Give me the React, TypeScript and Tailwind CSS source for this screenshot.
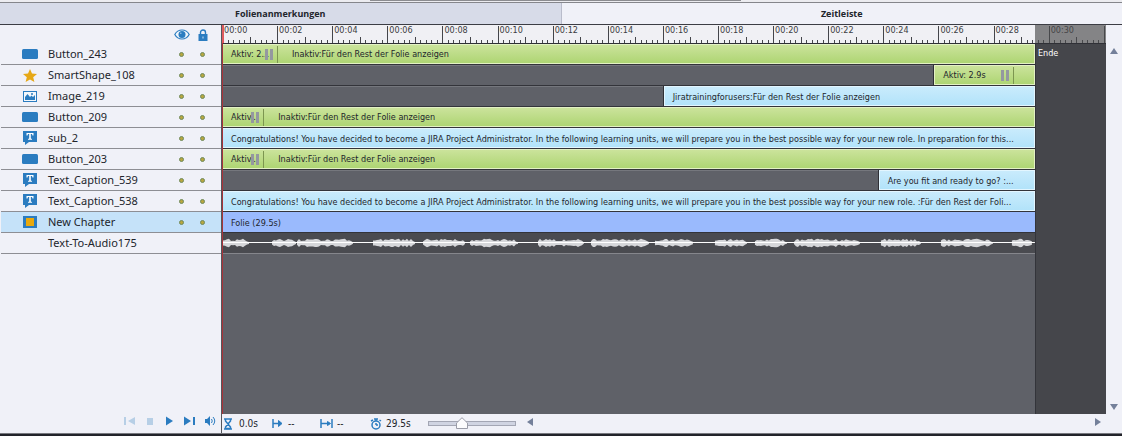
import type { ReactNode } from "react";
import { useState } from "react";

type Clip = { start: number; color: "green" | "blue" | "slide"; text: string; split?: number; rest?: string };
type Kind = "button" | "star" | "image" | "caption" | "slide" | "audio";
type Track = { name: string; kind: Kind; clip?: Clip };

const TOTAL = 32.08;
const END = 29.5;

const CONGRATS =
  "Congratulations! You have decided to become a JIRA Project Administrator. In the following learning units, we will prepare you in the best possible way for your new role. ";
const REST = "Inaktiv:Für den Rest der Folie anzeigen";

const tracks: Track[] = [
  { name: "Button_243", kind: "button", clip: { start: 0, color: "green", text: "Aktiv: 2...", split: 2, rest: REST } },
  { name: "SmartShape_108", kind: "star", clip: { start: 25.85, color: "green", text: "Aktiv: 2.9s", split: 28.75, rest: "" } },
  { name: "Image_219", kind: "image", clip: { start: 16.03, color: "blue", text: "Jiratrainingforusers:Für den Rest der Folie anzeigen" } },
  { name: "Button_209", kind: "button", clip: { start: 0, color: "green", text: "Aktiv...", split: 1.5, rest: REST } },
  { name: "sub_2", kind: "caption", clip: { start: 0, color: "blue", text: CONGRATS + "In preparation for this..." } },
  { name: "Button_203", kind: "button", clip: { start: 0, color: "green", text: "Aktiv...", split: 1.5, rest: REST } },
  { name: "Text_Caption_539", kind: "caption", clip: { start: 23.83, color: "blue", text: "Are you fit and ready to go? :..." } },
  { name: "Text_Caption_538", kind: "caption", clip: { start: 0, color: "blue", text: CONGRATS + ":Für den Rest der Foli..." } },
  { name: "New Chapter", kind: "slide", clip: { start: 0, color: "slide", text: "Folie (29.5s)" } },
  { name: "Text-To-Audio175", kind: "audio" },
];

const clipColors = {
  green: "bg-linear-to-b from-[#cbe39b] to-[#aed573] border-[#e3f1c4]",
  blue: "bg-linear-to-b from-[#c9ebfc] to-[#b2e3fa] border-[#e3f6ff]",
  slide: "bg-[#9abafd] border-[#9abafd]",
};

// spoken parts of the audio, in wave units (813 units = whole slide)
const speech = [
  [1, 28], [50, 74], [75, 131], [151, 194], [201, 244], [248, 296], [316, 362], [369, 427],
  [433, 472], [493, 526], [533, 565], [572, 638], [659, 699], [719, 771], [790, 811],
];

function wavePath() {
  let d = "";
  let seed = 7;
  for (const [from, to] of speech) {
    let top = "";
    let bottom = "";
    for (let x = from; x <= to; x += 2) {
      seed = (seed * 1103 + 377) % 9973;
      const edge = Math.min(1, (x - from + 3) / 5, (to - x + 2) / 7);
      const amp = Math.round((1.8 + (seed % 100) / 40) * edge * 10) / 10;
      top += `L${x} ${10 - amp}`;
      bottom = `L${x} ${10 + amp}` + bottom;
    }
    d += `M${from} 10${top}${bottom}Z`;
  }
  return d;
}

function KindIcon({ kind }: { kind: Kind }) {
  if (kind === "button") return <svg width="16" height="10"><rect width="16" height="10" rx="1.5" fill="#2b7cc0" /></svg>;
  if (kind === "star")
    return (
      <svg width="14" height="13" viewBox="0 0 14 13">
        <path d="M7 0l2 4.500 5 .5-3.800 3.200L11.400 13 7 10.400 2.600 13l1.200-4.800L0 5l5-.5z" fill="#e6a817" />
      </svg>
    );
  if (kind === "image")
    return (
      <svg width="14" height="11" viewBox="0 0 14 11">
        <rect x=".5" y=".5" width="13" height="10" fill="#f4f8fc" stroke="#2b7cc0" />
        <path d="M2 9V6l2.500-3L7 6l1.500-1.500L10 6l2-2v5z" fill="#2b7cc0" />
        <circle cx="9" cy="3" r="1" fill="#2b7cc0" />
      </svg>
    );
  if (kind === "caption")
    return (
      <svg width="14" height="14" viewBox="0 0 14 14">
        <path d="M0 0h14v11H6l-4 3v-3H0z" fill="#2b7cc0" />
        <path d="M3.500 2h7v2.500h-1L9 3H7.800v4.500l1.200.5v.8H5V8l1.200-.5V3H5l-.5 1.500h-1z" fill="#fff" />
      </svg>
    );
  if (kind === "slide")
    return (
      <svg width="14" height="12">
        <rect width="14" height="12" fill="#2b7cc0" />
        <rect x="3" y="2" width="8" height="8" fill="#e9a90c" />
      </svg>
    );
  return null;
}

function Dot({ label }: { label: string }) {
  return (
    <button aria-label={label} className="flex w-[21px] justify-center">
      <span className="size-[5px] rounded-full border border-[#6f8a5c] bg-[#b7a63f]" />
    </button>
  );
}

function TrackLabel({ track, selected, onSelect }: { track: Track; selected: boolean; onSelect: () => void }) {
  return (
    <div className={`ml-px flex h-[21px] items-center border-b border-[#8d8e94] pr-2 ${selected ? "bg-[#c5e2f9]" : ""}`}>
      <button onClick={onSelect} className="flex min-w-0 flex-1 items-center text-left">
        <span className="flex w-[47px] justify-center pl-[11px]">
          <KindIcon kind={track.kind} />
        </span>
        <span className="font-['Noto_Sans',sans-serif] text-[11px] leading-4 whitespace-nowrap">{track.name}</span>
      </button>
      {track.kind !== "audio" && (
        <>
          <Dot label={`Show ${track.name}`} />
          <Dot label={`Lock ${track.name}`} />
        </>
      )}
    </div>
  );
}

function ClipBar({ clip }: { clip: Clip }) {
  const total = END - clip.start;
  return (
    <>
      <div style={{ width: `${(clip.start / END) * 100}%` }} className="shrink-0 border-t border-[#75777d]" />
      <div className={`flex min-w-0 flex-1 items-center overflow-hidden border text-[9px] ${clip.start > 0 ? "shadow-[-1px_0_0_#2f3036]" : ""} ${clipColors[clip.color]}`}>
        {clip.split === undefined ? (
          <span className="truncate pt-px pl-2 leading-4">{clip.text}</span>
        ) : (
          <>
            <div
              style={{ width: `${((clip.split - clip.start) / total) * 100}%` }}
              className="relative h-[17px] shrink-0 border-r border-[#7c9650] pl-2 leading-4 whitespace-nowrap"
            >
              {clip.text}
              <span className="absolute top-[3px] right-1 flex h-[11px] w-2 justify-between">
                <span className="w-[3px] bg-[#9498a0]" />
                <span className="w-[3px] bg-[#9498a0]" />
              </span>
            </div>
            <span className="truncate pl-[14px] leading-4">{clip.rest}</span>
          </>
        )}
      </div>
    </>
  );
}

function Ruler() {
  return (
    <div className="flex h-[19px] overflow-hidden border-b border-[#2f3036] bg-[#f0f0f4]">
      {Array.from({ length: 17 }, (_, i) => (
        <div key={i} style={{ width: `${(2 / TOTAL) * 100}%` }} className="relative flex h-[18px] shrink-0 items-end">
          {Array.from({ length: 10 }, (_, j) => (
            <span key={j} className={`flex-1 border-l border-[#44454a] ${j === 0 ? "h-[17px]" : j === 5 ? "h-[6px]" : "h-[3px]"}`} />
          ))}
          {i < 16 && (
            <span className="absolute top-0 left-[2px] text-[9px] leading-[10px] text-[#3c3d42]">
              00:{String(i * 2).padStart(2, "0")}
            </span>
          )}
        </div>
      ))}
    </div>
  );
}

function Arrow({ dir, label }: { dir: "up" | "down" | "left" | "right"; label: string }) {
  const shapes = { up: "M0 7l4-6 4 6z", down: "M0 1l4 6 4-6z", left: "M7 0v8L1 4z", right: "M1 0v8l6-4z" };
  return (
    <button aria-label={label}>
      <svg width="8" height="8" viewBox="0 0 8 8"><path d={shapes[dir]} fill="#74809a" /></svg>
    </button>
  );
}

function Transport({ label, disabled, children }: { label: string; disabled?: boolean; children: ReactNode }) {
  return (
    <button aria-label={label} disabled={disabled} className="text-[#2b7cc0] disabled:text-[#b7cfe6]">
      <svg width="12" height="12" viewBox="0 0 12 12" fill="currentColor">{children}</svg>
    </button>
  );
}

export default function App() {
  const [tab, setTab] = useState("Zeitleiste");
  const [selected, setSelected] = useState("New Chapter");
  const [zoom, setZoom] = useState(37);

  return (
    <div className="bg-[#f0f1f8] font-['DejaVu_Sans_Condensed','DejaVu_Sans',sans-serif] text-[#22252c]">
      <div className="h-[3px] border-b border-[#85868b] bg-[#ececf0]">
        <div className="ml-[33%] h-px w-[33%] bg-[#8b8c90]" />
      </div>
      <div className="flex h-[22px] border-b border-[#3c3d44]">
        {["Folienanmerkungen", "Zeitleiste"].map((name) => (
          <button
            key={name}
            onClick={() => setTab(name)}
            className={`flex-1 font-['Open_Sans',sans-serif] text-[9px] font-bold ${tab === name ? "bg-[#f0f1f8]" : "border-r border-[#b9bccb] bg-[#d7dbe8]"}`}
          >
            {name}
          </button>
        ))}
      </div>

      <div className="flex">
        <div className="flex w-[222px] shrink-0 flex-col border-r border-[#55565c]">
          <div className="flex h-[19px] items-center justify-end pr-2">
            <span className="flex w-[21px] justify-center">
              <svg width="16" height="11" viewBox="0 0 16 11">
                <path d="M.8 5.500C4-.5 12-.5 15.200 5.500 12 11.500 4 11.500.8 5.500z" fill="#f0f6fc" stroke="#2b7cc0" strokeWidth="1.200" />
                <circle cx="8" cy="5.500" r="3.500" fill="#2b7cc0" />
                <circle cx="6.800" cy="4.200" r=".8" fill="#9cc4e6" />
              </svg>
            </span>
            <span className="flex w-[21px] justify-center">
              <svg width="10" height="12" viewBox="0 0 10 12">
                <path d="M2.500 6V3.500a2.500 2.500 0 015 0V6" fill="none" stroke="#2b7cc0" strokeWidth="1.400" />
                <rect x=".5" y="5" width="9" height="7" fill="#2b7cc0" />
                <path d="M4.500 7.500h1v2h-1z" fill="#cfe2f3" />
              </svg>
            </span>
          </div>
          {tracks.map((t) => (
            <TrackLabel key={t.name} track={t} selected={t.name === selected} onSelect={() => setSelected(t.name)} />
          ))}
          <div className="mt-auto flex h-[25px] items-center justify-end gap-2 pr-[5px]">
            <Transport label="Rewind" disabled><path d="M0 2h2v8H0zM11 2v8L4 6z" /></Transport>
            <Transport label="Stop" disabled><path d="M3 3h6v7H3z" /></Transport>
            <Transport label="Play"><path d="M2 1.500v9l7-4.500z" /></Transport>
            <Transport label="End"><path d="M0 1.500v9L7 6zM9 2h2v8H9z" /></Transport>
            <Transport label="Sound">
              <path d="M1 4h2l3-3v10L3 8H1z" />
              <path d="M7.500 4q1.500 2 0 4M9 2q3.500 4 0 8" fill="none" stroke="currentColor" />
            </Transport>
          </div>
        </div>

        <div className="flex min-w-0 flex-1 flex-col">
          <div className="flex">
            <div className="relative min-w-0 flex-1">
              <Ruler />
              <div className="flex h-[370px]">
                <div style={{ width: `${(END / TOTAL) * 100}%` }} className="flex flex-col bg-[#5f6168]">
                  {tracks.map((t) =>
                    t.clip ? (
                      <div key={t.name} className="flex h-[21px] border-b border-[#33343a]">
                        <ClipBar clip={t.clip} />
                      </div>
                    ) : (
                      <div key={t.name} className="h-[21px] border-b border-[#85868c] bg-[#4a4b50]">
                        <svg className="block h-5 w-full" viewBox="0 0 813 20" preserveAspectRatio="none">
                          <path d={wavePath()} fill="#d6d7da" />
                          <path d="M0 9.500h813" stroke="#fff" />
                        </svg>
                      </div>
                    ),
                  )}
                </div>
                <div className="flex-1 border-l border-[#33343a] bg-[#45464b] pt-[3px] pl-[2px] text-[9px] leading-3 text-white">Ende</div>
              </div>
              {/* part of the ruler after the slide has ended */}
              <div style={{ left: `${(END / TOTAL) * 100}%` }} className="absolute top-0 right-0 h-[18px] bg-[#4a4a4c]/65" />
              {/* playhead */}
              <div className="absolute top-0 left-0 h-full w-px bg-[#a8333a]" />
              <div className="absolute top-0 left-0 h-[18px] w-[2px] bg-[#e05a5f]" />
            </div>
            <div className="flex w-4 flex-col items-center justify-between pt-[22px] pb-[3px]">
              <Arrow dir="up" label="Scroll up" />
              <Arrow dir="down" label="Scroll down" />
            </div>
          </div>

          <div className="flex h-[19px] items-center pr-5 text-[10px]">
            <span className="flex w-[50px] items-center gap-[6px]">
              <svg width="10" height="12" viewBox="0 0 10 12" fill="none" stroke="#2b7cc0" strokeWidth="1.500" className="ml-px shrink-0">
                <path d="M1 1h8M1 11h8M2.500 1v2l5 6v2M7.500 1v2l-5 6v2" />
                <path d="M3 10.500h4" />
              </svg>
              0.0s
            </span>
            <span className="flex w-12 items-center gap-1">
              <svg width="12" height="10" viewBox="0 0 12 10" fill="none" stroke="#2b7cc0" strokeWidth="1.500">
                <path d="M1 0v9M1 4.500h7" />
                <path d="M6.500 1.500v6l3.500-3z" fill="#2b7cc0" strokeWidth="1" />
              </svg>
              --
            </span>
            <span className="flex w-[50px] items-center gap-1">
              <svg width="13" height="10" viewBox="0 0 13 10" fill="none" stroke="#2b7cc0" strokeWidth="1.500">
                <path d="M1 0v9M12 0v9M1 4.500h8" />
                <path d="M7.500 2.500v4l3-2z" fill="#2b7cc0" strokeWidth="1" />
              </svg>
              --
            </span>
            <span className="flex w-[58px] items-center gap-1">
              <svg width="12" height="12" viewBox="0 0 12 12" fill="none" stroke="#2b7cc0" strokeWidth="1.500">
                <circle cx="6" cy="7" r="4" />
                <path d="M4 1h4M6 1v2M6 7V5M6 7h2M1 3l2-1M11 3L9.500 2" />
              </svg>
              29.5s
            </span>
            <div className="relative flex h-4 w-[88px] items-center">
              <span className="h-[5px] w-full border border-[#a3a6b4] bg-[#d0d4e2]" />
              <svg style={{ left: `${zoom - 5}%` }} className="absolute top-[1px]" width="12" height="12" viewBox="0 0 12 12">
                <path d="M6 .7L11.500 6v5.500H.5V6z" fill="#fbfbfd" stroke="#9a9ca8" />
              </svg>
              <input
                type="range"
                aria-label="Zoom"
                value={zoom}
                onChange={(e) => setZoom(Number(e.target.value))}
                className="absolute inset-0 w-full opacity-0"
              />
            </div>
            <span className="flex flex-1 items-start justify-between pl-[10px] pb-1">
              <Arrow dir="left" label="Scroll left" />
              <Arrow dir="right" label="Scroll right" />
            </span>
          </div>
        </div>
      </div>
      <div className="h-[3px] border-t border-[#77787e] bg-[#22232a]" />
    </div>
  );
}
